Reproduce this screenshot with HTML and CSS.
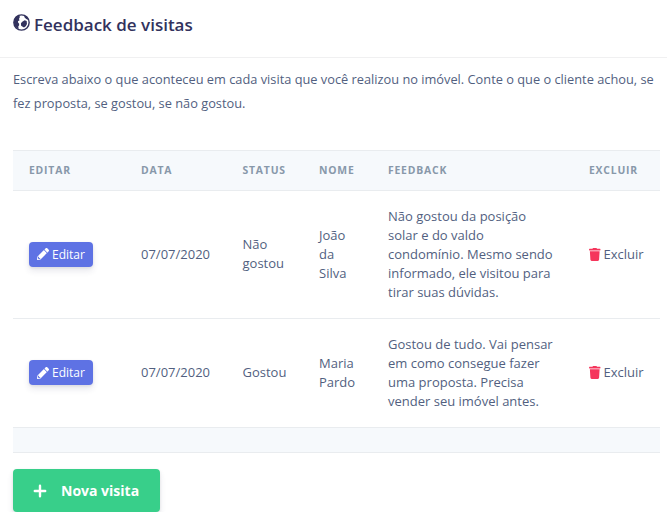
FILE: index.html
```html
<!DOCTYPE html>
<html lang="pt-BR">
<head>
    <meta charset="UTF-8">
    <meta name="viewport" content="width=device-width, initial-scale=1.0">
    <title>Feedback de visitas</title>
    <link rel="stylesheet" href="styles.css">
</head>
<body>
    <div class="card-header">
        <h3>
            <svg class="icon-globe" viewBox="0 0 18 18">
                <circle cx="9" cy="9" r="8.1" fill="none" stroke="currentColor" stroke-width="1.5"/>
                <path fill="currentColor" d="M3.800 2.500L6.600 1.300 7.300 3.300 6.300 5.200 7 6.500 5.200 7.600 5.400 9 6.500 10.300 6.500 12 5.600 13.300 6 15.800C3 14.800 1 12.200 1 9 1 6.300 2.200 4.200 3.800 2.500Z"/>
                <path fill="currentColor" d="M9.800 8.200L12.300 6.600 14.500 7.400 14.800 10.600 13.500 13 11.600 14.200 10.300 13.600 8.600 12.500 8.400 9.700ZM11.600 1.200L14.800 3 16.500 6.300 14 5.400 12.300 3.800Z"/>
            </svg>
            Feedback de visitas
        </h3>
    </div>

    <div class="card-body">
        <p>Escreva abaixo o que aconteceu em cada visita que você realizou no imóvel. Conte o que o cliente achou, se fez proposta, se gostou, se não gostou.</p>

        <table class="table">
            <thead>
                <tr>
                    <th class="col-editar">Editar</th>
                    <th class="col-data">Data</th>
                    <th class="col-status">Status</th>
                    <th class="col-nome">Nome</th>
                    <th class="col-feedback">Feedback</th>
                    <th class="col-excluir">Excluir</th>
                </tr>
            </thead>
            <tbody>
                <tr>
                    <td>
                        <a class="btn-editar"><svg class="icon-pencil" viewBox="0 0 512 512"><path d="M498 142l-46 46c-5 5-13 5-17 0L324 77c-5-5-5-12 0-17l46-46c19-19 49-19 68 0l60 60c19 19 19 49 0 68zM284 100L22 362 0 484c-3 16 12 30 28 28l122-22 262-262c5-5 5-13 0-17L301 100c-4-5-12-5-17 0zM88 424h48v36l-64 12-32-32 12-64h36v48z" fill-rule="evenodd"/></svg>Editar</a>
                    </td>
                    <td>07/07/2020</td>
                    <td>Não gostou</td>
                    <td>João da Silva</td>
                    <td class="feedback">Não gostou da posição solar e do valdo condomínio. Mesmo sendo informado, ele visitou para tirar suas dúvidas.</td>
                    <td class="excluir"><svg class="icon-trash" viewBox="0 0 448 512"><path d="M432 32H312l-9-19A24 24 0 0 0 281 0H167a24 24 0 0 0-22 13l-9 19H16A16 16 0 0 0 0 48v32a16 16 0 0 0 16 16h416a16 16 0 0 0 16-16V48a16 16 0 0 0-16-16zM53 467a48 48 0 0 0 48 45h246a48 48 0 0 0 48-45l21-339H32z"/></svg>Excluir</td>
                </tr>
                <tr>
                    <td>
                        <a class="btn-editar"><svg class="icon-pencil" viewBox="0 0 512 512"><path d="M498 142l-46 46c-5 5-13 5-17 0L324 77c-5-5-5-12 0-17l46-46c19-19 49-19 68 0l60 60c19 19 19 49 0 68zM284 100L22 362 0 484c-3 16 12 30 28 28l122-22 262-262c5-5 5-13 0-17L301 100c-4-5-12-5-17 0zM88 424h48v36l-64 12-32-32 12-64h36v48z" fill-rule="evenodd"/></svg>Editar</a>
                    </td>
                    <td>07/07/2020</td>
                    <td>Gostou</td>
                    <td>Maria Pardo</td>
                    <td class="feedback">Gostou de tudo. Vai pensar em como consegue fazer uma proposta. Precisa vender seu imóvel antes.</td>
                    <td class="excluir"><svg class="icon-trash" viewBox="0 0 448 512"><path d="M432 32H312l-9-19A24 24 0 0 0 281 0H167a24 24 0 0 0-22 13l-9 19H16A16 16 0 0 0 0 48v32a16 16 0 0 0 16 16h416a16 16 0 0 0 16-16V48a16 16 0 0 0-16-16zM53 467a48 48 0 0 0 48 45h246a48 48 0 0 0 48-45l21-339H32z"/></svg>Excluir</td>
                </tr>
            </tbody>
            <tfoot>
                <tr>
                    <th colspan="6"></th>
                </tr>
            </tfoot>
        </table>

        <button class="btn-nova">
            <svg class="icon-plus" viewBox="0 0 14 14"><path d="M7 1.800v10.400M1.800 7h10.400"/></svg>
            Nova visita
        </button>
    </div>
</body>
</html>
```
FILE: styles.css
```css
body {
    font-family: "Open Sans", sans-serif;
    font-size: 13px;
    margin: 0;
    color: #525f7f;
    background-color: #fff;
}
.card-header {
    height: 57px;
    padding: 0 13px;
    border-bottom: 1px solid #f0f0f1;
}
h3 {
    display: flex;
    gap: 4px;
    margin: 0;
    padding-top: 12px;
    font-size: 17px;
    font-weight: 600;
    line-height: 25px;
    color: #32325d;
}
.icon-globe {
    width: 17px;
    height: 17px;
    margin-top: 2px;
}
.card-body {
    padding: 9px 7px 0 13px;
}
p {
    margin: 0 0 35px;
    font-size: 12.8px;
    line-height: 24px;
}
.table {
    width: 647px;
    table-layout: fixed;
    border-collapse: collapse;
}
.table th {
    padding: 12px 16px;
    height: 15px;
    font-size: 10.4px;
    font-weight: 700;
    line-height: 15px;
    letter-spacing: .8px;
    text-align: left;
    text-transform: uppercase;
    color: #8898aa;
    background-color: #f6f9fc;
    border-top: 1px solid #e9ecef;
    border-bottom: 1px solid #e9ecef;
}
.table td {
    padding: 15.5px 16px 16.5px;
    line-height: 19px;
    vertical-align: middle;
    border-top: 1px solid #e9ecef;
}
.table .feedback {
    padding: 16px;
}
.table tfoot th {
    height: 24px;
    padding: 0;
}
.col-editar {
    width: 80px;
}
.col-data {
    width: 69.5px;
}
.col-status {
    width: 44.5px;
}
.col-nome {
    width: 37px;
}
.col-feedback {
    width: 169px;
}
.col-excluir {
    width: 55px;
}
.table .excluir {
    padding-right: 0;
    white-space: nowrap;
}
.btn-editar {
    display: inline-flex;
    align-items: center;
    gap: 3px;
    box-sizing: border-box;
    width: 64px;
    height: 25px;
    padding: 0 8px;
    font-size: 12px;
    font-weight: 500;
    color: #fff;
    vertical-align: middle;
    background-color: #5e72e4;
    border-radius: 4px;
    box-shadow: 0 4px 6px rgba(50, 50, 93, .11), 0 1px 3px rgba(0, 0, 0, .08);
}
.icon-pencil {
    flex: none;
    width: 12px;
    height: 12px;
    fill: #fff;
}
.icon-trash {
    width: 11.5px;
    height: 13px;
    margin-right: 3px;
    vertical-align: -2px;
    fill: #f5365c;
}
.btn-nova {
    display: flex;
    align-items: center;
    gap: 14px;
    width: 147px;
    height: 43px;
    margin-top: 16px;
    padding: 0 20px;
    font-family: inherit;
    font-size: 14px;
    font-weight: 700;
    white-space: nowrap;
    color: #fff;
    background-color: #38cf8a;
    border: none;
    border-radius: 4px;
    box-shadow: 0 4px 6px rgba(50, 50, 93, .11), 0 1px 3px rgba(0, 0, 0, .08);
}
.icon-plus {
    flex: none;
    width: 14px;
    height: 14px;
    fill: none;
    stroke: #fff;
    stroke-width: 2.4;
    stroke-linecap: round;
}
```
